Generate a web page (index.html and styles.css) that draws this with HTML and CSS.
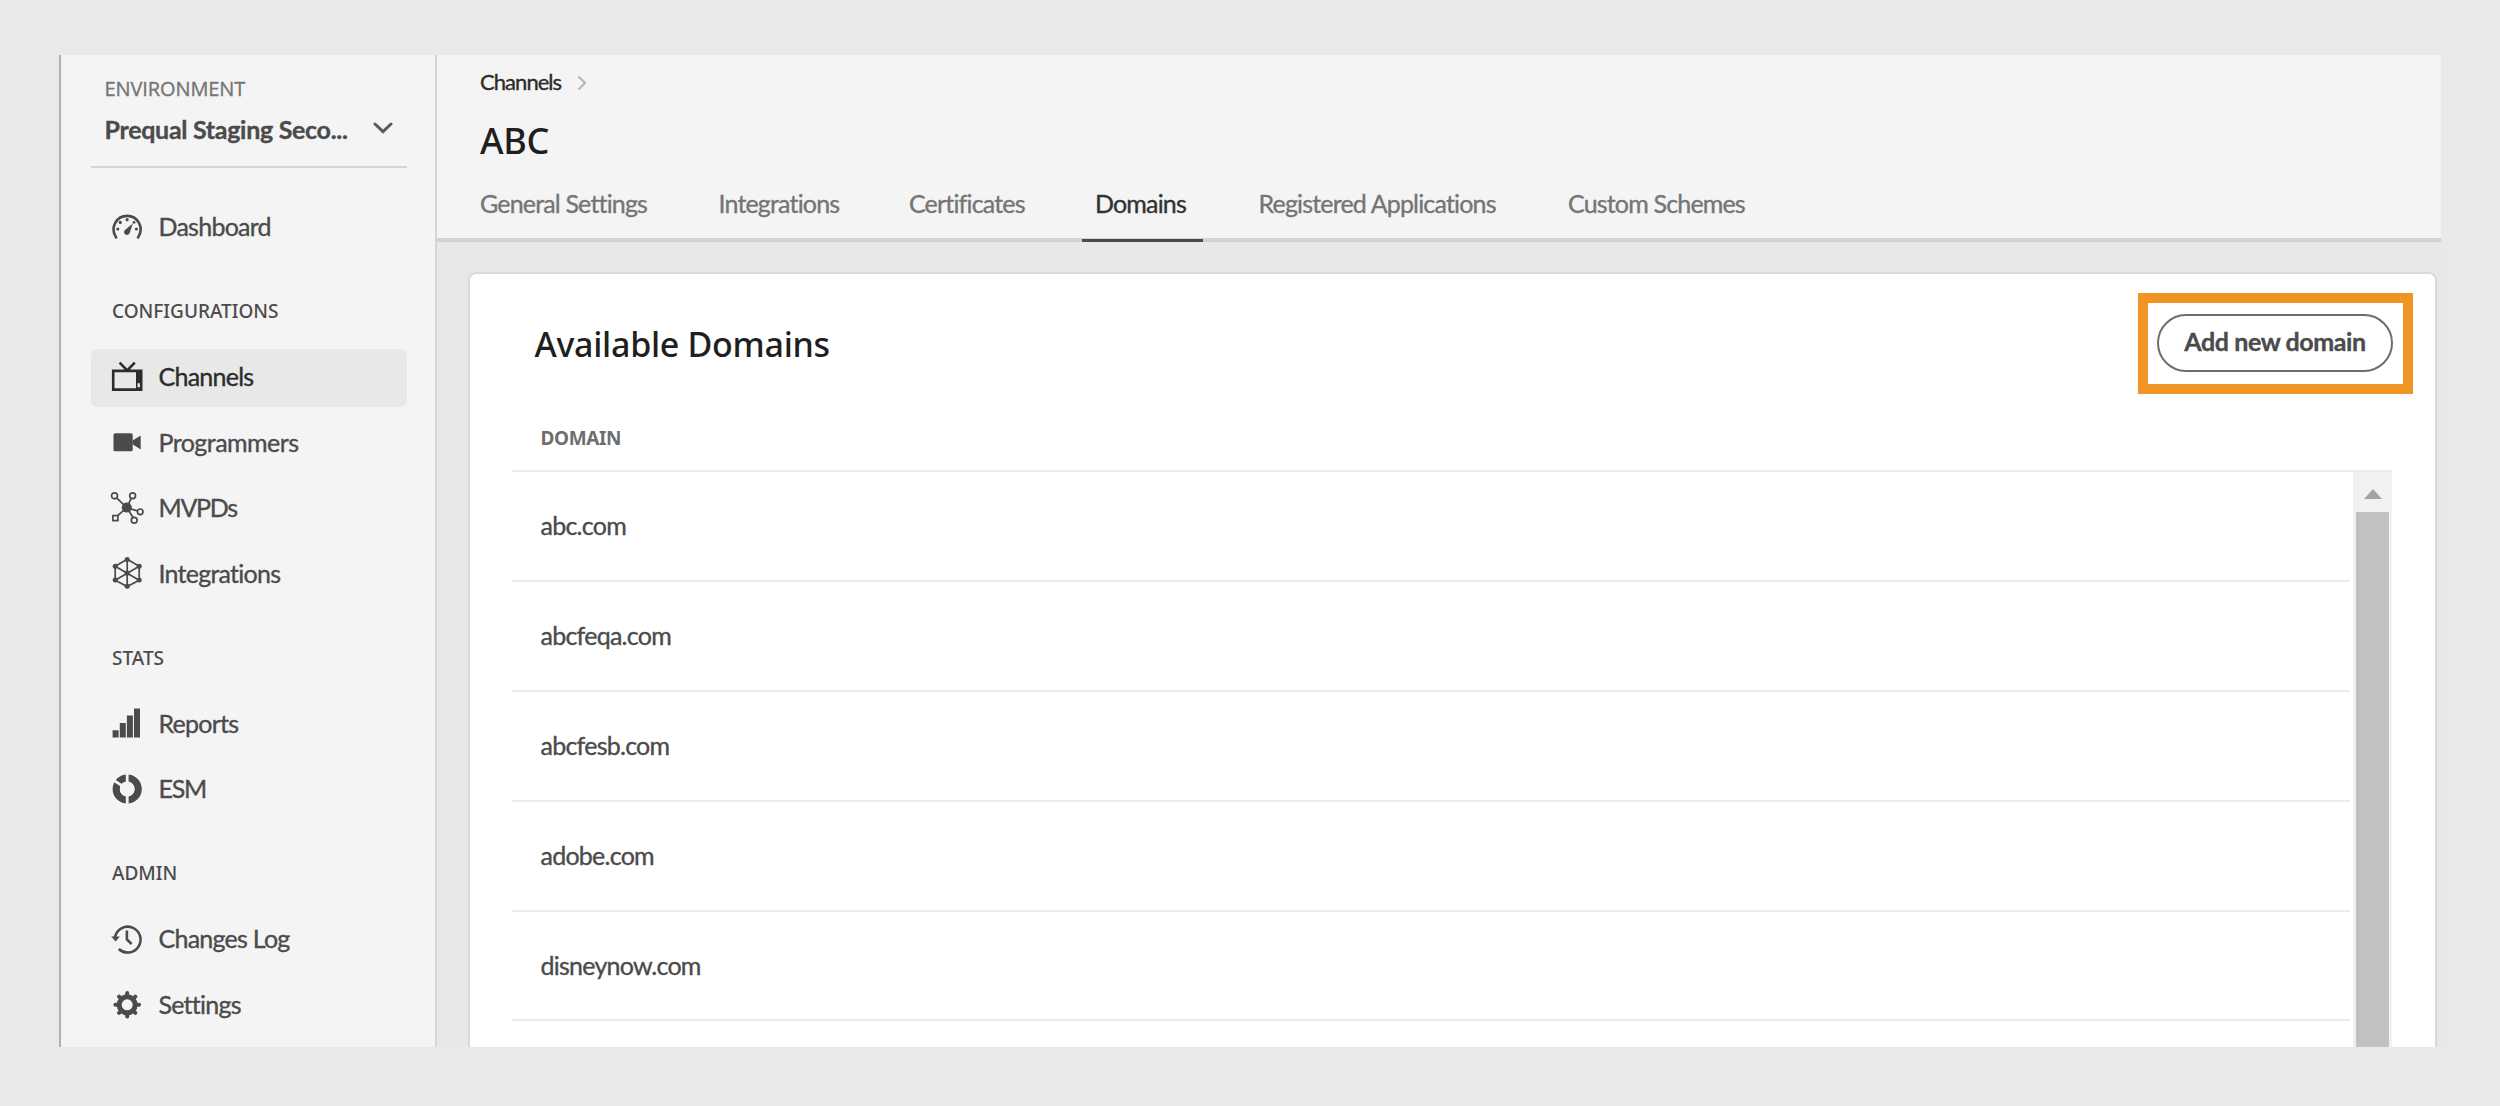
FILE: index.html
```html
<!DOCTYPE html>
<html lang="en">
<head>
<meta charset="utf-8">
<title>ABC - Domains</title>
<link rel="stylesheet" href="styles.css">
</head>
<body>
<div class="frame">
  <aside class="sidebar">
    <div class="env-label">ENVIRONMENT</div>
    <div class="env-select">
      <span>Prequal Staging Seco...</span>
      <svg class="env-chevron" viewBox="0 0 20 12"><path d="M2 2l8 7.6L18 2"/></svg>
    </div>
    <nav class="nav">
      <a class="item">
        <svg class="icon" viewBox="0 0 36 36"><path class="line" d="M7.6 28.4L6.4 26.1A13.5 13.5 0 1 1 29.8 26.1L28.6 28.4"/><circle cx="8.8" cy="19" r="1.6"/><circle cx="11.3" cy="12.4" r="1.6"/><circle cx="18.1" cy="9.7" r="1.6"/><circle cx="25" cy="12.4" r="1.4"/><circle cx="27.4" cy="19" r="1.6"/><path d="M23.8 13.6L20.6 23.2A2.9 2.9 0 1 1 15.7 20.2Z"/></svg>
        <span>Dashboard</span>
      </a>
      <h3 class="section">CONFIGURATIONS</h3>
      <a class="item item-active">
        <svg class="icon" viewBox="0 0 36 36"><path class="line" d="M4.2 10.9H32.2V29.6H4.2ZM10.6 2.6l7.6 7.8 7.6-7.8"/><path fill-rule="evenodd" d="M27 10.5h5.5v18.8H27zM28.5 23.3v4h3.2v-4z"/></svg>
        <span>Channels</span>
      </a>
      <a class="item item-wide">
        <svg class="icon" viewBox="0 0 36 36"><rect x="4.5" y="8.3" width="19.2" height="18" rx="1.6"/><path d="M23.5 15.4L31.7 10.4V24.6L23.5 19.2Z"/></svg>
        <span>Programmers</span>
      </a>
      <a class="item item-caps">
        <svg class="icon" viewBox="0 0 36 36"><path class="thin" d="M7.6 6.8L17.8 16.6L22.2 7.3M17.8 16.6L28.4 19.9M17.8 16.6L24 26.5M17.8 16.6L8.4 24.9"/><circle cx="17.8" cy="16.6" r="5"/><g class="thin"><circle cx="5.5" cy="4.8" r="3"/><circle cx="23.6" cy="4.8" r="2.9"/><circle cx="31.2" cy="20.8" r="2.8"/><circle cx="25.2" cy="29.2" r="2.9"/><rect x="3.9" y="24.6" width="5" height="5"/></g></svg>
        <span>MVPDs</span>
      </a>
      <a class="item">
        <svg class="icon" viewBox="0 0 36 36"><path class="thin" d="M18.2 3.2L30.2 10.2V24.2L18.2 30.6L6.2 24.2V10.2ZM18.2 3.2V30.6M6.2 10.2L30.2 24.2M30.2 10.2L6.2 24.2"/><circle cx="18.2" cy="3.6" r="2.5"/><circle cx="30.2" cy="10.2" r="2.5"/><circle cx="30.2" cy="24" r="2.5"/><circle cx="18.2" cy="30.2" r="2.5"/><circle cx="6.2" cy="24" r="2.5"/><circle cx="6.2" cy="10.2" r="2.5"/><circle cx="18.2" cy="17.1" r="2.6"/></svg>
        <span>Integrations</span>
      </a>
      <h3 class="section">STATS</h3>
      <a class="item">
        <svg class="icon" viewBox="0 0 36 36"><path d="M3.6 24.3h6v7.3h-6zM10.8 16.9h6v14.7h-6zM17.9 9.6h6v22h-6zM25 2.4h6v29.2h-6z"/></svg>
        <span>Reports</span>
      </a>
      <a class="item item-caps">
        <svg class="icon" viewBox="0 0 36 36"><circle class="ring" cx="18.2" cy="17" r="11"/><path class="gap" d="M18.2 1V33M18.2 17L3.6 7.6"/><circle class="hole" cx="18.2" cy="17" r="7.4"/></svg>
        <span>ESM</span>
      </a>
      <h3 class="section">ADMIN</h3>
      <a class="item">
        <svg class="icon" viewBox="0 0 36 36"><path class="line" d="M6 15.2A12.9 12.9 0 1 1 9.8 27M17.9 8.4V17.4L22.6 22"/><path d="M2.2 14.4H10.8L6.7 19.6Z"/></svg>
        <span>Changes Log</span>
      </a>
      <a class="item">
        <svg class="icon" viewBox="0 0 36 36"><circle class="gear" cx="18.2" cy="17.8" r="8"/><path class="teeth" d="M18.2 8.5V6M18.2 27.1V29.6M8.9 17.8H6.4M27.5 17.8H30M11.6 11.2L10.1 9.7M24.8 24.4L26.3 25.9M24.8 11.2L26.3 9.7M11.6 24.4L10.1 25.9"/></svg>
        <span>Settings</span>
      </a>
    </nav>
  </aside>
  <main class="main">
    <header class="header">
      <div class="crumbs">
        <span>Channels</span>
        <svg class="crumb-chevron" viewBox="0 0 10 16"><path d="M1.5 1.5L8 8l-6.500 6.500"/></svg>
      </div>
      <h1 class="title">ABC</h1>
      <div class="tabs">
        <a class="tab">General Settings</a>
        <a class="tab">Integrations</a>
        <a class="tab">Certificates</a>
        <a class="tab tab-active">Domains</a>
        <a class="tab">Registered Applications</a>
        <a class="tab">Custom Schemes</a>
      </div>
    </header>
    <section class="card">
      <div class="card-head">
        <h2 class="card-title">Available Domains</h2>
        <div class="action">
          <button class="button">Add new domain</button>
          <div class="highlight"></div>
        </div>
      </div>
      <div class="table">
        <div class="th">DOMAIN</div>
        <div class="body">
          <div class="rows">
            <div class="row">abc.com</div>
            <div class="row">abcfeqa.com</div>
            <div class="row">abcfesb.com</div>
            <div class="row">adobe.com</div>
            <div class="row">disneynow.com</div>
          </div>
          <div class="scrollbar">
            <svg class="arrow" viewBox="0 0 18 10"><path d="M9 0L18 10H0Z"/></svg>
            <div class="thumb"></div>
          </div>
        </div>
      </div>
    </section>
  </main>
</div>
</body>
</html>
```
FILE: styles.css
```css
* {
  box-sizing: border-box;
}

body {
  margin: 0;
  height: 1106px;
  padding: 55px 59px 59px;
  background: #e9e9e9;
  color: #4b4b4b;
  font-family: Lato, "Noto Sans", sans-serif;
  font-size: 25px;
  letter-spacing: -0.75px;
  -webkit-text-stroke: 0.35px currentColor;
  overflow: hidden;
}

h1, h2, h3 {
  margin: 0;
}

.frame {
  display: flex;
  height: 992px;
  border-left: 2px solid #b0b0b0;
  background: #e8e8e8;
  overflow: hidden;
}

/* Sidebar */

.sidebar {
  flex: none;
  width: 376px;
  padding: 20px 28.5px 0 29.5px;
  border-right: 2px solid #d6d6d6;
  background: #f4f4f4;
}

.env-label {
  padding-left: 14px;
  font: 20px/27px "Open Sans", sans-serif;
  letter-spacing: -0.1px;
  color: #757575;
}

.env-select {
  display: flex;
  align-items: center;
  justify-content: space-between;
  height: 66px;
  padding: 0 14px 11px 14px;
  border-bottom: 2px solid #d4d4d4;
  font-weight: 700;
  letter-spacing: -0.3px;
}

.env-chevron {
  width: 20px;
  height: 12px;
  margin-top: -1px;
  fill: none;
  stroke: #5a5a5a;
  stroke-width: 3;
  stroke-linecap: round;
}

.nav {
  padding-top: 31px;
}

.item {
  display: flex;
  align-items: center;
  gap: 13.5px;
  height: 57.4px;
  padding-left: 18.5px;
  border-radius: 6px;
}

.item + .item {
  margin-top: 8px;
}

.item span {
  padding-bottom: 3px;
}

.item-wide {
  letter-spacing: -0.55px;
}

.item-caps {
  letter-spacing: -1.3px;
}

.item-active {
  background: #e8e8e8;
  color: #2c2c2c;
}

.section {
  height: 92.8px;
  padding: 42px 0 0 21.5px;
  font: 500 19px/27px "Noto Sans", sans-serif;
  letter-spacing: 0;
  -webkit-text-stroke: 0;
}

.icon {
  width: 36px;
  height: 36px;
  fill: currentColor;
}

.icon .line {
  fill: none;
  stroke: currentColor;
  stroke-width: 2.6;
}

.icon .thin {
  fill: none;
  stroke: currentColor;
  stroke-width: 1.7;
}

.icon .ring {
  fill: none;
  stroke: currentColor;
  stroke-width: 7.2;
}

.icon .gap {
  stroke: #f4f4f4;
  stroke-width: 2.8;
}

.icon .hole {
  fill: #f4f4f4;
}

.icon .gear {
  fill: none;
  stroke: currentColor;
  stroke-width: 5;
}

.icon .teeth {
  stroke: currentColor;
  stroke-width: 4;
  stroke-linecap: round;
}

/* Page header */

.main {
  flex: 1;
  min-width: 0;
}

.header {
  height: 187px;
  padding-left: 43px;
  border-bottom: 4px solid #d2d2d2;
  background: #f4f4f4;
}

.crumbs {
  display: flex;
  align-items: center;
  gap: 16px;
  height: 53px;
  font-size: 22px;
  letter-spacing: -0.95px;
  color: #2c2c2c;
}

.crumb-chevron {
  width: 10px;
  height: 16px;
  margin-top: 3px;
  fill: none;
  stroke: #b5b5b5;
  stroke-width: 2;
}

.title {
  font: 500 36px/65px "Noto Sans", sans-serif;
  letter-spacing: -0.3px;
  color: #1f1f1f;
  -webkit-text-stroke: 0;
}

.tabs {
  display: grid;
  grid-template-columns: 238.5px 190.5px 186px 163.5px 309.5px auto;
  justify-content: start;
  line-height: 60px;
  letter-spacing: -0.83px;
  color: #757575;
}

.tab {
  position: relative;
  height: 65px;
  white-space: nowrap;
}

.tab-active {
  color: #323232;
}

.tab-active::after {
  content: "";
  position: absolute;
  left: -13px;
  bottom: -4px;
  width: 121px;
  height: 3px;
  background: #4b4b4b;
}

/* Card */

.card {
  height: 860px;
  margin: 30px 4px 0 30.5px;
  border: 2px solid #d9d9d9;
  border-radius: 8px;
  background: #fff;
}

.card-head {
  display: flex;
  align-items: center;
  justify-content: space-between;
  height: 139px;
  padding: 0 42px 0 65px;
}

.card-title {
  font: 500 34px/46px "Noto Sans", sans-serif;
  letter-spacing: -0.3px;
  color: #1f1f1f;
  -webkit-text-stroke: 0;
}

.action {
  position: relative;
  margin-bottom: 1.500px;
}

.button {
  display: block;
  width: 236px;
  height: 58px;
  padding: 0 0 3px;
  border: 2.500px solid #6e6e6e;
  border-radius: 29px;
  background: #fff;
  color: #4b4b4b;
  font: 700 25px Lato, sans-serif;
  letter-spacing: -0.4px;
}

.highlight {
  position: absolute;
  inset: -21px -20px -22px -19px;
  border: 10px solid #f29423;
}

.table {
  margin: 0 43px 0 42.500px;
}

.th {
  height: 59px;
  padding-left: 28.500px;
  border-bottom: 2px solid #ececec;
  font: 700 19px/51px "Noto Sans", sans-serif;
  letter-spacing: -0.4px;
  color: #6e6e6e;
  -webkit-text-stroke: 0;
}

.body {
  display: flex;
  gap: 3px;
}

.rows {
  flex: 1;
}

.row {
  height: 109.9px;
  padding-left: 28.500px;
  border-bottom: 2px solid #ececec;
  line-height: 107px;
}

.scrollbar {
  display: flex;
  flex-direction: column;
  align-items: center;
  width: 39px;
  height: 640px;
  background: #f1f1f1;
}

.arrow {
  flex: none;
  width: 18px;
  height: 10px;
  margin: 17px 0 13px;
  fill: #a3a3a3;
}

.thumb {
  flex: 1;
  width: 33px;
  background: #c1c1c1;
}
```
